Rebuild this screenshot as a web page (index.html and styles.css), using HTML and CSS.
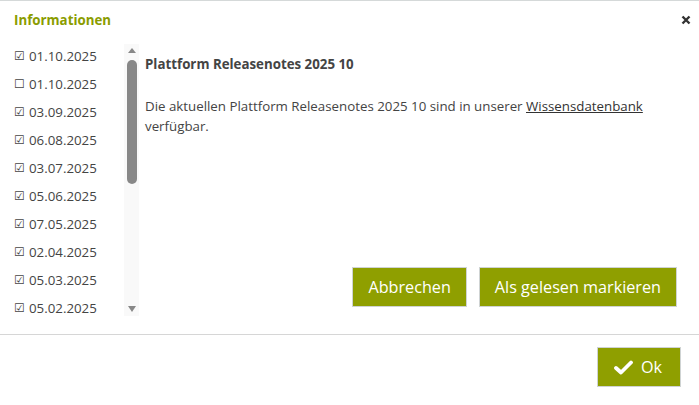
FILE: index.html
```html
<!DOCTYPE html>
<html lang="de">
<head>
<meta charset="utf-8">
<link rel="stylesheet" href="styles.css">
</head>
<body>
<div class="dialog">
  <div class="header">
    <span class="title">Informationen</span>
    <span class="close" aria-label="Schließen">
      <svg width="10" height="10" viewBox="0 0 10 10"><path d="M1.5 1.5 L8.5 8.5 M8.5 1.5 L1.5 8.5" stroke="#333" stroke-width="2.4" stroke-linecap="butt"/></svg>
    </span>
  </div>
  <div class="body">
    <ul class="list">
      <li><span class="box">☑</span>01.10.2025</li>
      <li><span class="box">☐</span>01.10.2025</li>
      <li><span class="box">☑</span>03.09.2025</li>
      <li><span class="box">☑</span>06.08.2025</li>
      <li><span class="box">☑</span>03.07.2025</li>
      <li><span class="box">☑</span>05.06.2025</li>
      <li><span class="box">☑</span>07.05.2025</li>
      <li><span class="box">☑</span>02.04.2025</li>
      <li><span class="box">☑</span>05.03.2025</li>
      <li><span class="box">☑</span>05.02.2025</li>
    </ul>
    <div class="scrollbar">
      <span class="arrow up"></span>
      <span class="thumb"></span>
      <span class="spacer"></span>
      <span class="arrow down"></span>
    </div>
    <div class="content">
      <h2 class="heading">Plattform Releasenotes 2025 10</h2>
      <p class="text">Die aktuellen Plattform Releasenotes 2025 10 sind in unserer <a href="#">Wissensdatenbank</a> verfügbar.</p>
      <div class="actions">
        <button class="btn">Abbrechen</button>
        <button class="btn">Als gelesen markieren</button>
      </div>
    </div>
  </div>
  <div class="footer">
    <button class="btn ok">
      <svg width="19" height="15" viewBox="0 0 19 15"><path d="M2 8 L7 12.5 L17 2.5" fill="none" stroke="#fff" stroke-width="3.8" stroke-linecap="round" stroke-linejoin="round"/></svg>
      Ok
    </button>
  </div>
</div>
</body>
</html>
```

FILE: styles.css
```css
* { box-sizing: border-box; }
html, body { margin: 0; padding: 0; background: #fff; }
body { font-family: "Open Sans", "Liberation Sans", sans-serif; color: #444; font-size: 13.3px; }

.dialog {
  width: 699px;
  height: 405px;
  border-top: 1px solid #d5d9d9;
  display: flex;
  flex-direction: column;
}

.header {
  height: 40px;
  display: flex;
  align-items: center;
  justify-content: space-between;
  padding: 0 8px 3px 14px;
}
.title { font-weight: 700; font-size: 13.3px; color: #8a9c00; }
.close { display: flex; width: 10px; height: 10px; margin-top: 1px; }

.body {
  height: 294px;
  display: flex;
  border-bottom: 1px solid #d6d6d6;
}

.list {
  list-style: none;
  margin: 0;
  padding: 1px 0 0 14px;
  width: 124px;
  flex: none;
  overflow: hidden;
}
.list li {
  height: 28px;
  line-height: 28px;
  white-space: nowrap;
  color: #444;
}
.box {
  display: inline-block;
  width: 15px;
  font-family: "DejaVu Sans", sans-serif;
  font-size: 12px;
  color: #444;
  vertical-align: top;
}

.scrollbar {
  width: 15px;
  flex: none;
  margin: 3px 0 18px;
  background: #f9f9f9;
  display: flex;
  flex-direction: column;
  align-items: center;
}
.arrow { width: 0; height: 0; border-left: 4px solid transparent; border-right: 4px solid transparent; }
.arrow.up { margin-top: 4px; border-bottom: 5px solid #888; }
.arrow.down { margin-bottom: 4px; border-top: 6px solid #888; }
.thumb { width: 10px; height: 124px; margin-top: 7px; background: #888; border-radius: 5px; }
.spacer { flex: 1; }

.content {
  flex: 1;
  padding: 13px 22px 27px 6px;
  display: flex;
  flex-direction: column;
}
.heading { margin: 0; font-size: 13.3px; font-weight: 700; line-height: 20px; color: #444; }
.text { margin: 22px 0 0; line-height: 20px; color: #444; }
.text a { color: #333; text-decoration: underline; }

.actions {
  margin-top: auto;
  display: flex;
  justify-content: flex-end;
  gap: 12px;
}
.btn {
  height: 40px;
  padding: 0 15px;
  background: #8f9f00;
  border: 1px solid #cfd3d3;
  color: #fff;
  font-family: "Open Sans", "Liberation Sans", sans-serif;
  font-size: 16.2px;
  cursor: pointer;
}

.footer {
  flex: 1;
  display: flex;
  justify-content: flex-end;
  align-items: flex-start;
  padding: 12px 18px 0 0;
}
.ok {
  display: flex;
  align-items: center;
  gap: 8px;
  width: 84px;
  padding: 0 16px;
}
```
